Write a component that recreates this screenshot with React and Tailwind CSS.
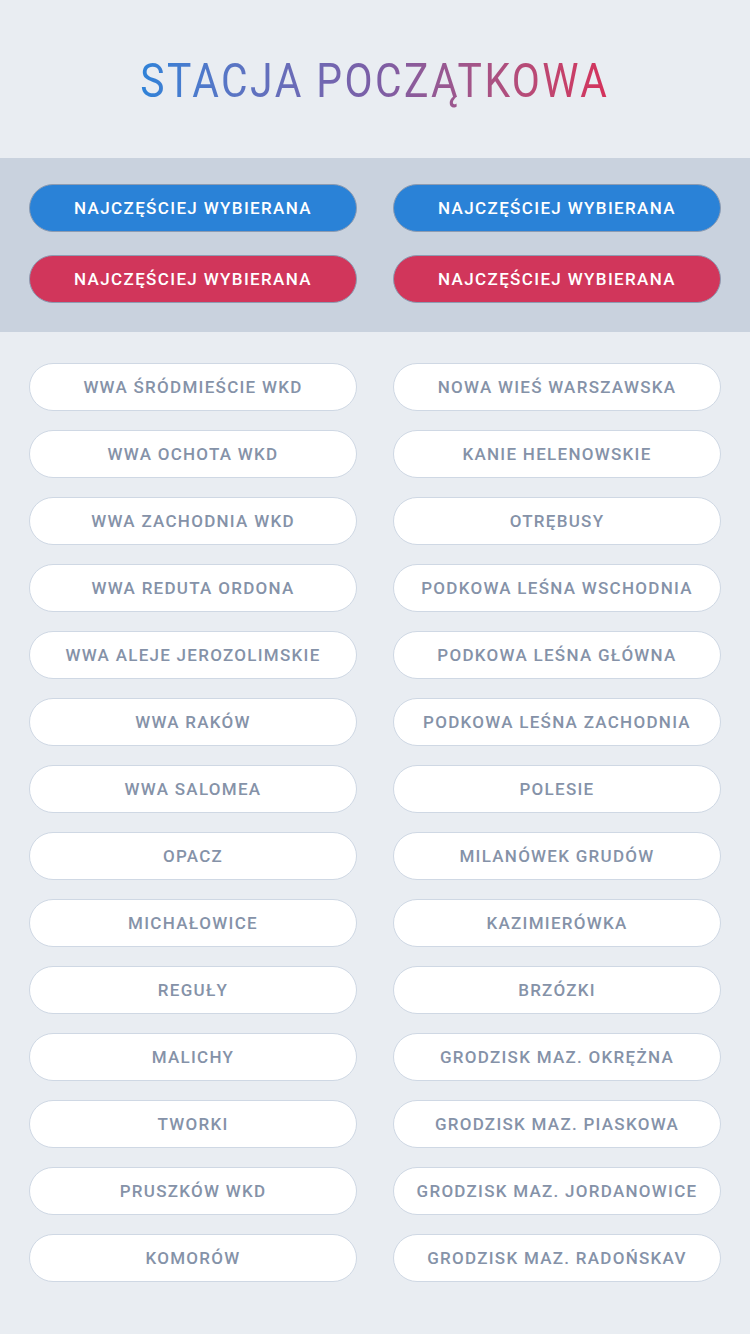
import React from "react";

const left = [
  "WWA ŚRÓDMIEŚCIE WKD",
  "WWA OCHOTA WKD",
  "WWA ZACHODNIA WKD",
  "WWA REDUTA ORDONA",
  "WWA ALEJE JEROZOLIMSKIE",
  "WWA RAKÓW",
  "WWA SALOMEA",
  "OPACZ",
  "MICHAŁOWICE",
  "REGUŁY",
  "MALICHY",
  "TWORKI",
  "PRUSZKÓW WKD",
  "KOMORÓW",
];

const right = [
  "NOWA WIEŚ WARSZAWSKA",
  "KANIE HELENOWSKIE",
  "OTRĘBUSY",
  "PODKOWA LEŚNA WSCHODNIA",
  "PODKOWA LEŚNA GŁÓWNA",
  "PODKOWA LEŚNA ZACHODNIA",
  "POLESIE",
  "MILANÓWEK GRUDÓW",
  "KAZIMIERÓWKA",
  "BRZÓZKI",
  "GRODZISK MAZ. OKRĘŻNA",
  "GRODZISK MAZ. PIASKOWA",
  "GRODZISK MAZ. JORDANOWICE",
  "GRODZISK MAZ. RADOŃSKAV",
];

const Pill = ({ label, color }) => (
  <button
    className={`h-12 w-full rounded-full border border-[#8d9cb2] pt-[2px] text-[17px] font-medium tracking-[0.08em] text-white ${color}`}
  >
    {label}
  </button>
);

const Station = ({ name }) => (
  <button className="h-12 w-full rounded-full border border-[#cfd8e4] bg-white pt-[2px] text-[17px] font-medium tracking-[0.075em] text-[#8592a8]">
    {name}
  </button>
);

export default function App() {
  return (
    <div className="min-h-[1334px] w-full bg-[#e9edf2] font-['Roboto',sans-serif]">
      <div className="flex h-[158px] items-center justify-center pt-[8px]">
        <h1 className="scale-x-[0.85] bg-gradient-to-r from-[#2d82d8] via-[#7b5ea6] to-[#d5305a] bg-clip-text pb-1 text-[48px] font-normal tracking-[0.06em] text-transparent">
          STACJA POCZĄTKOWA
        </h1>
      </div>

      <div className="grid grid-cols-2 gap-x-9 gap-y-[23px] bg-[#c9d2de] px-[29px] pt-[26px] pb-[29px]">
        <Pill label="NAJCZĘŚCIEJ WYBIERANA" color="bg-[#2a82d7]" />
        <Pill label="NAJCZĘŚCIEJ WYBIERANA" color="bg-[#2a82d7]" />
        <Pill label="NAJCZĘŚCIEJ WYBIERANA" color="bg-[#d1365b]" />
        <Pill label="NAJCZĘŚCIEJ WYBIERANA" color="bg-[#d1365b]" />
      </div>

      <div className="grid grid-cols-2 gap-x-9 px-[29px] pt-[31px] pb-[51px]">
        <div className="flex flex-col gap-[19px]">
          {left.map((s) => (
            <Station key={s} name={s} />
          ))}
        </div>
        <div className="flex flex-col gap-[19px]">
          {right.map((s) => (
            <Station key={s} name={s} />
          ))}
        </div>
      </div>
    </div>
  );
}
